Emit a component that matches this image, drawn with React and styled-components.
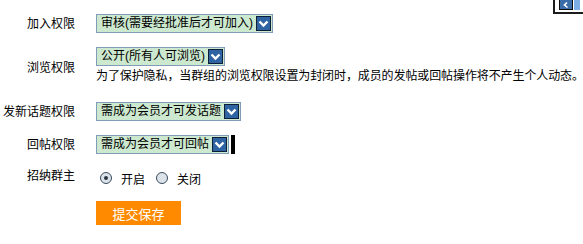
import React from "react";
import styled, { createGlobalStyle } from "styled-components";

const GlobalStyle = createGlobalStyle`
  html, body {
    margin: 0;
    padding: 0;
    background: #ffffff;
  }
  body {
    font-family: "Liberation Sans", "Noto Sans CJK SC", sans-serif;
    font-size: 12px;
    color: #000000;
  }
`;

const PageEl = styled.div`
  position: relative;
  width: 583px;
  height: 244px;
  overflow: hidden;
`;

const FormEl = styled.div`
  display: grid;
  grid-template-columns: 96px auto;
  row-gap: 14px;
  padding-top: 14px;
`;

const LabelEl = styled.div`
  display: flex;
  align-items: center;
  justify-content: flex-end;
  padding-right: 21px;
  white-space: nowrap;
  line-height: 14px;
  margin-top: ${(p) => p.$shift || 0}px;
`;

const FieldEl = styled.div`
  display: flex;
  flex-direction: ${(p) => (p.$stack ? "column" : "row")};
  align-items: ${(p) => (p.$stack ? "flex-start" : "center")};
  min-height: 19px;
  min-width: 0;
`;

const SelectEl = styled.div`
  display: inline-flex;
  align-items: center;
  height: 19px;
  box-sizing: border-box;
  border: 1px solid #7f9db9;
  background: #cce8cf;
  padding-left: 4px;
  padding-right: 1px;
  white-space: nowrap;
  line-height: 17px;
`;

const SelectTextEl = styled.span`
  margin-right: 3px;
`;

const ArrowEl = styled.span`
  display: inline-flex;
  align-items: center;
  justify-content: center;
  width: 15px;
  height: 15px;
  box-sizing: border-box;
  border: 1px solid #0f1e38;
  background: #2f64a3;
`;

const CaretEl = styled.span`
  width: 4px;
  height: 19px;
  background: #000000;
  margin-left: 2px;
`;

const NoteEl = styled.div`
  white-space: nowrap;
  letter-spacing: -0.1px;
  line-height: 16px;
  margin-top: 2px;
  margin-bottom: 4px;
`;

const RadioGroupEl = styled.div`
  display: flex;
  align-items: center;
  padding-left: 4px;
  margin-top: 1px;
`;

const RadioEl = styled.span`
  position: relative;
  width: 12px;
  height: 12px;
  box-sizing: border-box;
  border-radius: 50%;
  border: 1px solid #3c4c5e;
  background: #dbe2ea;
  margin-right: 9px;

  &::after {
    content: "";
    display: ${(p) => (p.$checked ? "block" : "none")};
    position: absolute;
    left: 3px;
    top: 3px;
    width: 4px;
    height: 4px;
    border-radius: 50%;
    background: #2a3542;
  }
`;

const RadioTextEl = styled.span`
  margin-right: 11px;
`;

const SubmitEl = styled.button`
  width: 85px;
  height: 24px;
  border: none;
  background: #ff8a00;
  color: #ffffff;
  font-family: "Liberation Sans", "Noto Sans CJK SC", sans-serif;
  font-size: 13px;
  padding: 0;
  cursor: pointer;
`;

const CornerEl = styled.div`
  position: absolute;
  top: 0;
  right: 0;
  width: 24px;
  height: 12px;
  border-left: 2px solid #1c1c1c;
  border-bottom: 2px solid #1c1c1c;
  display: flex;
  align-items: flex-start;
  padding-left: 4px;
  gap: 1px;
`;

const CornerBtnEl = styled.span`
  display: flex;
  align-items: center;
  justify-content: center;
  width: 14px;
  height: 10px;
  box-sizing: border-box;
  border: 1px solid #101010;
  border-top: none;
  background: #3a6ca8;
`;

const CornerStripEl = styled.span`
  width: 6px;
  height: 10px;
  background: #7eaee6;
`;

const Chevron = () => (
  <svg width="11" height="9" viewBox="0 0 11 9">
    <path d="M1.5 2.5 L5.5 6.5 L9.5 2.5" fill="none" stroke="#ffffff" strokeWidth="2.4" />
  </svg>
);

const Select = ({ value }) => (
  <SelectEl>
    <SelectTextEl>{value}</SelectTextEl>
    <ArrowEl>
      <Chevron />
    </ArrowEl>
  </SelectEl>
);

const Radio = ({ checked, label }) => (
  <>
    <RadioEl $checked={checked} />
    <RadioTextEl>{label}</RadioTextEl>
  </>
);

export default function App() {
  return (
    <>
      <GlobalStyle />
      <PageEl>
        <CornerEl>
          <CornerBtnEl>
            <svg width="8" height="8" viewBox="0 0 8 8">
              <path d="M5 1.5 L2.5 4 L5.5 6.5" fill="none" stroke="#ffffff" strokeWidth="1.6" />
            </svg>
          </CornerBtnEl>
          <CornerStripEl />
        </CornerEl>

        <FormEl>
          <LabelEl>加入权限</LabelEl>
          <FieldEl>
            <Select value="审核(需要经批准后才可加入)" />
          </FieldEl>

          <LabelEl>浏览权限</LabelEl>
          <FieldEl $stack>
            <Select value="公开(所有人可浏览)" />
            <NoteEl>为了保护隐私，当群组的浏览权限设置为封闭时，成员的发帖或回帖操作将不产生个人动态。</NoteEl>
          </FieldEl>

          <LabelEl>发新话题权限</LabelEl>
          <FieldEl>
            <Select value="需成为会员才可发话题" />
          </FieldEl>

          <LabelEl>回帖权限</LabelEl>
          <FieldEl>
            <Select value="需成为会员才可回帖" />
            <CaretEl />
          </FieldEl>

          <LabelEl $shift={-4}>招纳群主</LabelEl>
          <FieldEl>
            <RadioGroupEl>
              <Radio checked label="开启" />
              <Radio label="关闭" />
            </RadioGroupEl>
          </FieldEl>

          <div />
          <FieldEl>
            <SubmitEl>提交保存</SubmitEl>
          </FieldEl>
        </FormEl>
      </PageEl>
    </>
  );
}
